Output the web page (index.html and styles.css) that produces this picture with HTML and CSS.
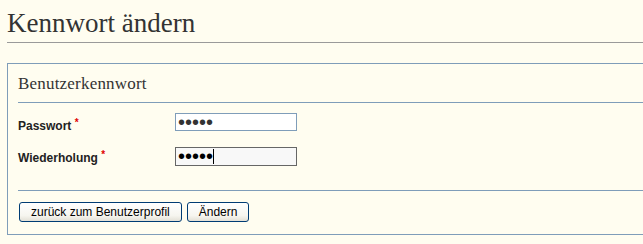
FILE: index.html
```html
<!DOCTYPE html>
<html lang="de">
<head>
<meta charset="utf-8">
<title>Kennwort ändern</title>
<link rel="stylesheet" href="styles.css">
</head>
<body>
<div class="page">
  <h1 class="title">Kennwort ändern</h1>
  <form class="panel">
    <h2 class="section-title">Benutzerkennwort</h2>
    <div class="row row-first">
      <label class="label" for="pw1">Passwort <span class="req">*</span></label>
      <input class="field" id="pw1" type="password" value="12345">
    </div>
    <div class="row row-second">
      <label class="label" for="pw2">Wiederholung <span class="req">*</span></label>
      <span class="field-wrap">
        <input class="field field-active" id="pw2" type="password" value="12345">
        <span class="caret"></span>
      </span>
    </div>
    <div class="actions">
      <button type="button" class="btn">zurück zum Benutzerprofil</button>
      <button type="button" class="btn">Ändern</button>
    </div>
  </form>
</div>
</body>
</html>
```
FILE: styles.css
```css
html, body {
  margin: 0;
  padding: 0;
  background: #fffdf0;
}
body {
  overflow: hidden;
}
.page {
  padding-left: 7px;
}
.title {
  margin: 0;
  padding: 8px 0 3px 0;
  font-family: "Liberation Serif", serif;
  font-size: 27px;
  line-height: 31px;
  font-weight: normal;
  color: #333;
  border-bottom: 1px solid #9a9a9a;
}
.panel {
  margin: 20px 0 0 0;
  padding: 0 0 0 10px;
  border: 1px solid #7f9db9;
  border-right: none;
}
.section-title {
  margin: 0;
  padding: 10px 0 8px 0;
  font-family: "Liberation Serif", serif;
  font-size: 17px;
  line-height: 20px;
  font-weight: normal;
  color: #333;
  letter-spacing: 0.2px;
  border-bottom: 1px solid #7f9db9;
}
.row {
  display: flex;
  align-items: center;
  height: 18px;
}
.row-first {
  margin-top: 10px;
}
.row-second {
  margin-top: 16px;
}
.label {
  width: 157px;
  font-family: "Liberation Sans", Arial, sans-serif;
  font-size: 12px;
  font-weight: bold;
  color: #222;
  line-height: 14px;
}
.row-first .label {
  padding-top: 5px;
}
.row-second .label {
  padding-top: 0;
}
.req {
  color: #e00000;
  font-size: 10px;
  vertical-align: 4px;
}
.field {
  box-sizing: border-box;
  width: 122px;
  height: 18px;
  margin: 0;
  padding: 0 1px 0 2px;
  border: 1px solid #7f9db9;
  background: #fff;
  font-family: "Liberation Sans", Arial, sans-serif;
  font-size: 20px;
  color: #333;
  outline: none;
}
.field-wrap {
  position: relative;
  display: block;
  height: 19px;
}
.field-active {
  display: block;
  height: 19px;
  border-color: #666;
  background: #f8f8f8;
  color: #000;
}
.caret {
  position: absolute;
  left: 38px;
  top: 2px;
  width: 1px;
  height: 15px;
  background: #000;
}
.actions {
  display: flex;
  gap: 5px;
  margin-top: 25px;
  padding: 11px 0 12px 1px;
  border-top: 1px solid #7f9db9;
}
.btn {
  height: 20px;
  margin: 0;
  padding: 0 11px;
  border: 1px solid #003c74;
  border-radius: 3px;
  background: linear-gradient(#ffffff, #f6f5ef 70%, #e3e0d6);
  font-family: "Liberation Sans", Arial, sans-serif;
  font-size: 12px;
  color: #000;
  line-height: 18px;
}
```
